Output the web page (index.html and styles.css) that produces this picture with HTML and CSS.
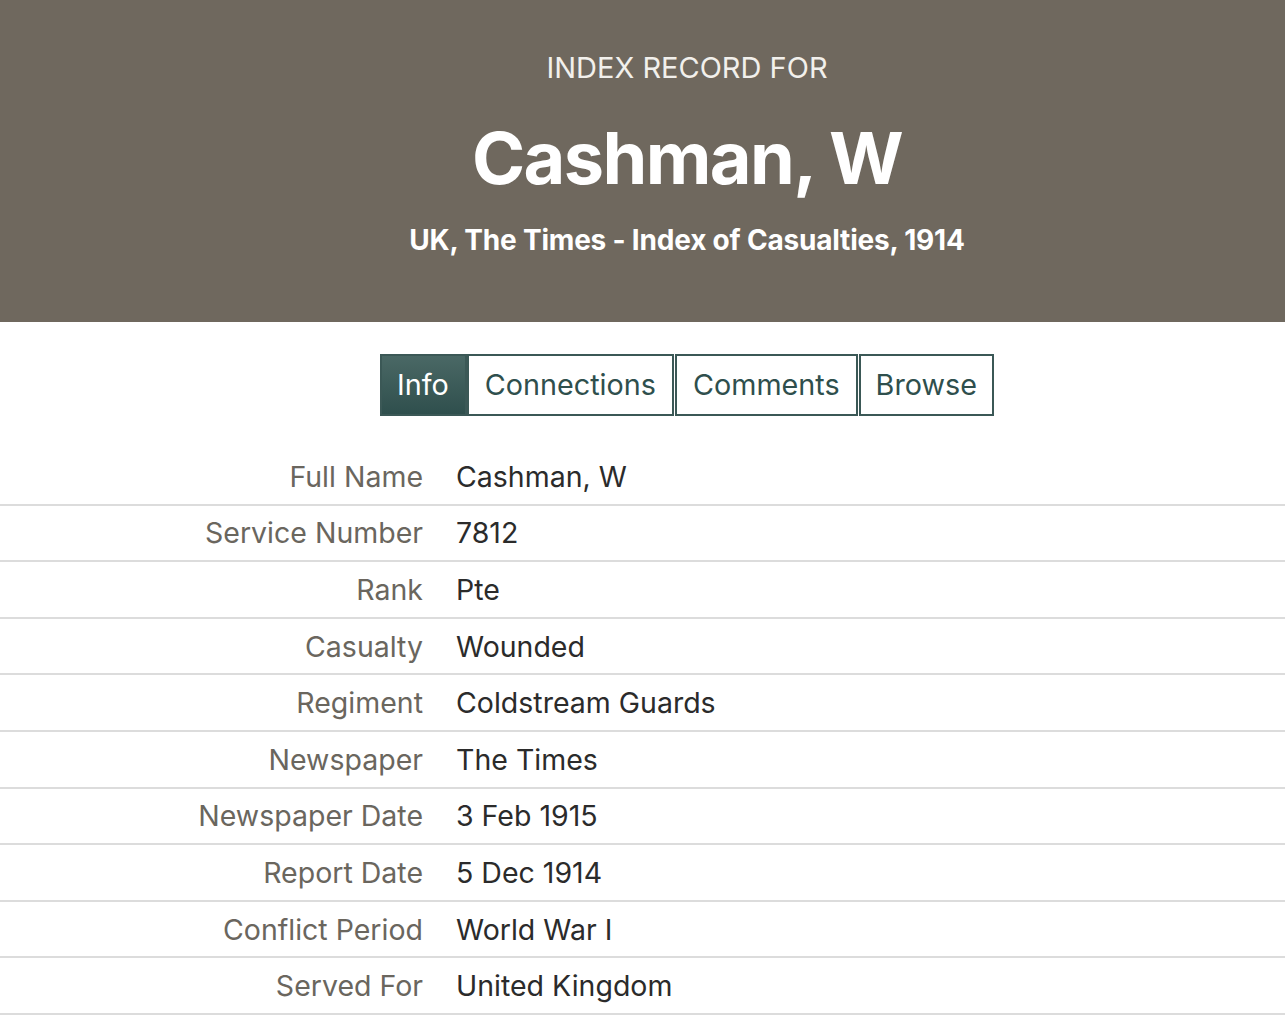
FILE: index.html
```html
<!DOCTYPE html>
<html>
<head>
<meta charset="utf-8">
<link rel="stylesheet" href="styles.css">
</head>
<body>
<header class="hero">
  <div class="kicker">INDEX RECORD FOR</div>
  <h1 class="name">Cashman, W</h1>
  <div class="source">UK, The Times - Index of Casualties, 1914</div>
</header>
<nav class="tabs">
  <a class="tab active">Info</a>
  <a class="tab">Connections</a>
  <a class="tab">Comments</a>
  <a class="tab">Browse</a>
</nav>
<div class="records">
  <div class="row"><div class="label">Full Name</div><div class="value">Cashman, W</div></div>
  <div class="row"><div class="label">Service Number</div><div class="value">7812</div></div>
  <div class="row"><div class="label">Rank</div><div class="value">Pte</div></div>
  <div class="row"><div class="label">Casualty</div><div class="value">Wounded</div></div>
  <div class="row"><div class="label">Regiment</div><div class="value">Coldstream Guards</div></div>
  <div class="row"><div class="label">Newspaper</div><div class="value">The Times</div></div>
  <div class="row"><div class="label">Newspaper Date</div><div class="value">3 Feb 1915</div></div>
  <div class="row"><div class="label">Report Date</div><div class="value">5 Dec 1914</div></div>
  <div class="row"><div class="label">Conflict Period</div><div class="value">World War I</div></div>
  <div class="row"><div class="label">Served For</div><div class="value">United Kingdom</div></div>
</div>
</body>
</html>
```
FILE: styles.css
```css
* { box-sizing: border-box; }
body {
  margin: 0;
  font-family: Inter, "Liberation Sans", sans-serif;
  background: #fff;
  color: #2b2b2b;
}
.hero {
  background: #6f685e;
  color: #fff;
  height: 322px;
  display: flex;
  flex-direction: column;
  align-items: center;
  padding-top: 50px;
  padding-left: 89px;
}
.kicker {
  font-size: 29px;
  line-height: 36px;
  letter-spacing: 0;
  color: #f2f0ec;
}
.name {
  margin: 30px 0 0;
  font-size: 72px;
  line-height: 84px;
  font-weight: 700;
  letter-spacing: -1.6px;
}
.source {
  margin-top: 22px;
  font-size: 28px;
  line-height: 36px;
  font-weight: 700;
  letter-spacing: -0.2px;
}
.tabs {
  display: flex;
  justify-content: center;
  margin-top: 32px;
  padding-left: 89px;
}
.tab {
  display: block;
  height: 62px;
  line-height: 58px;
  padding: 0 16px;
  border: 2px solid #3b5856;
  color: #2f4f4d;
  font-size: 28.75px;
  background: #fff;
}
.tab + .tab { margin-left: 1px; }
.tab.active {
  background: linear-gradient(#4a6865, #2f4f4d);
  color: #fff;
  margin-right: -1px;
  padding: 0 16px 0 15px;
}
.tab:last-child { padding: 0 15px; }
.records {
  margin-top: 33px;
}
.row {
  display: grid;
  grid-template-columns: 423px 1fr;
  column-gap: 33px;
  height: 56.6px;
  align-items: center;
  border-bottom: 2px solid #dcdcdc;
  font-size: 28.5px;
}
.label {
  text-align: right;
  color: #6a665e;
}
.value {
  color: #2b2b2b;
}
```
